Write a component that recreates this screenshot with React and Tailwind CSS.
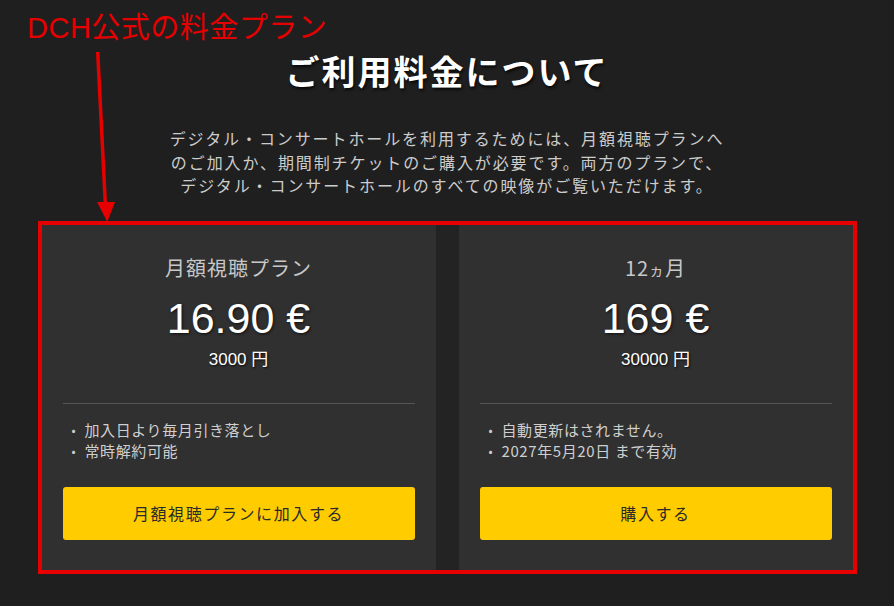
import React from "react";

const jp = { fontFamily: '"Noto Sans CJK JP", "Noto Sans", sans-serif' };
const latin = { fontFamily: '"Liberation Sans", "Noto Sans CJK JP", sans-serif' };

const plans = [
  {
    title: <>月額視聴プラン</>,
    price: "16.90 €",
    yen: "3000 円",
    notes: ["加入日より毎月引き落とし", "常時解約可能"],
    cta: "月額視聴プランに加入する",
  },
  {
    title: (
      <>
        12<span className="text-[15px] leading-none">ヵ</span>月
      </>
    ),
    price: "169 €",
    yen: "30000 円",
    notes: ["自動更新はされません。", "2027年5月20日 まで有効"],
    cta: "購入する",
  },
];

function PlanCard({ plan }) {
  return (
    <div className="w-[394px] bg-[#303030] px-[21px] pt-[29px] pb-[30px] flex flex-col">
      {/* Header */}
      <div className="h-[28px] text-center text-[20px] leading-[28px] tracking-[1px] text-[#c8c8c8]" style={jp}>
        {plan.title}
      </div>
      <div
        className="mt-[11px] text-center text-[43px] leading-[50px] text-white [text-shadow:1px_1px_3px_rgba(0,0,0,0.7)]"
        style={latin}
      >
        {plan.price}
      </div>
      <div
        className="mt-[5px] text-center text-[17px] leading-[24px] text-white [text-shadow:1px_1px_2px_rgba(0,0,0,0.8)]"
        style={latin}
      >
        {plan.yen}
      </div>

      <div className="mt-[31px] h-px bg-[#555555]" />

      {/* Notes */}
      <ul className="mt-[15px] pl-[9px] text-[15px] leading-[21px] tracking-[0.6px] text-[#cfcfcf]" style={jp}>
        {plan.notes.map((n) => (
          <li key={n} className="flex">
            <span className="w-[13px] text-[12px]">•</span>
            <span>{n}</span>
          </li>
        ))}
      </ul>

      <button
        className="mt-[26px] h-[53px] w-full rounded-[3px] bg-[#ffcc00] text-[16px] tracking-[1.6px] text-[#2a2a2a]"
        style={jp}
      >
        {plan.cta}
      </button>
    </div>
  );
}

export default function App() {
  return (
    <div className="relative min-h-[606px] w-full overflow-hidden bg-[#1f1f1f] flex flex-col items-center" style={jp}>
      {/* Annotation */}
      <div
        className="absolute left-[27px] top-[10px] text-[29px] leading-[36px] tracking-[0.5px] text-[#e60000]"
        style={latin}
      >
        DCH公式の料金プラン
      </div>
      <svg className="absolute left-[90px] top-[45px]" width="30" height="180" viewBox="0 0 30 180">
        <line x1="7.7" y1="7" x2="15.3" y2="158" stroke="#e60000" strokeWidth="3.5" />
        <polygon points="7,157 25,157 17.3,177" fill="#e60000" />
      </svg>

      <h1 className="mt-[51px] text-[34px] leading-[40px] font-bold tracking-[2px] text-white [text-shadow:1px_2px_3px_rgba(0,0,0,0.8)]">
        ご利用料金について
      </h1>

      <p className="mt-[36px] text-center text-[16px] leading-[23.5px] tracking-[1.9px] text-[#cccccc]">
        デジタル・コンサートホールを利用するためには、月額視聴プランへ
        <br />
        のご加入か、期間制チケットのご購入が必要です。両方のプランで、
        <br />
        デジタル・コンサートホールのすべての映像がご覧いただけます。
      </p>

      {/* Plans */}
      <div className="mt-[23px] flex border-4 border-[#e60000] bg-[#232323] gap-[23px]">
        {plans.map((p, i) => (
          <PlanCard key={i} plan={p} />
        ))}
      </div>
    </div>
  );
}
